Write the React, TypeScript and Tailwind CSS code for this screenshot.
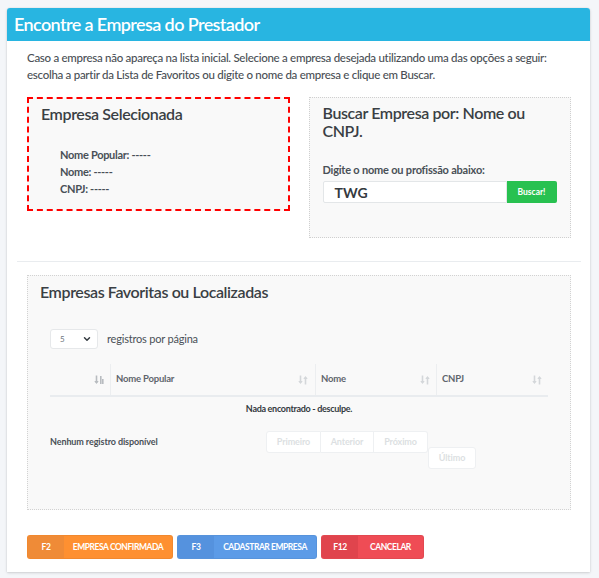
import { ChevronDown } from "lucide-react";

function SortIcon({ active }: { active?: boolean }) {
  const c = active ? "#b8bcc0" : "#d4d7da";
  return (
    <svg width="10" height="10" viewBox="0 0 10 10" className="shrink-0">
      {/* down arrow */}
      <path d="M2.5 0.5v7.5" stroke={c} strokeWidth="1.6" fill="none" />
      <path d="M0.3 6l2.2 3 2.2-3z" fill={c} />
      {active ? (
        <>
          <rect x="6" y="1" width="1.6" height="8" fill={c} />
          <rect x="8" y="4" width="1.6" height="5" fill={c} />
        </>
      ) : (
        <>
          <path d="M7.5 9.5v-7.5" stroke={c} strokeWidth="1.6" fill="none" />
          <path d="M5.3 4l2.2-3 2.2 3z" fill={c} />
        </>
      )}
    </svg>
  );
}

function ActionButton({ k, label, main, dark, w }: any) {
  return (
    <button
      className={`flex h-[24px] items-stretch overflow-hidden whitespace-nowrap rounded-[3px] border border-black/5 text-[8.5px] font-bold uppercase tracking-[-0.45px] text-white ${main} ${w}`}
    >
      <span className={`flex w-[36px] items-center justify-center ${dark}`}>{k}</span>
      <span className="flex flex-1 items-center justify-center">{label}</span>
    </button>
  );
}

export default function App() {
  return (
    <div className="min-h-[578px] bg-[#f4f6f9] pl-[7px] pr-[9px] pt-[8px] font-['Lato',sans-serif] text-[#495057]">
      <div className="rounded-t-[3px] bg-white pb-[13px] shadow-[0_0_1px_rgba(0,0,0,0.2),0_1px_3px_rgba(0,0,0,0.15)]">
        {/* HEADER */}
        <div className="flex h-[33px] items-center rounded-t-[3px] bg-[#28b5e1] px-[7px] text-[18px] font-semibold tracking-[-0.6px] text-white">
          Encontre a Empresa do Prestador
        </div>

        <div className="pl-[20px] pr-[19px]">
          <p className="pt-[8px] text-[11.5px] font-medium leading-[17px] tracking-[-0.28px] text-[#4a4f55]">
            Caso a empresa não apareça na lista inicial. Selecione a empresa desejada utilizando uma das opções a seguir:
            escolha a partir da Lista de Favoritos ou digite o nome da empresa e clique em Buscar.
          </p>

          {/* TOP BOXES */}
          <div className="mt-[14px] grid grid-cols-2 items-start gap-[19px]">
            <div className="border-2 border-dashed border-[#ff0000] bg-[#f9f9f9] pb-[11px] pl-[12px] pt-[4px]">
              <h3 className="text-[16px] font-semibold leading-[22px] tracking-[-0.4px] text-[#3a3f44]">
                Empresa Selecionada
              </h3>
              <div className="mt-[22px] space-y-[0.5px] pl-[19px] text-[11px] font-bold leading-[16.5px] tracking-[-0.3px] text-[#495057]">
                <div>Nome Popular: -----</div>
                <div>Nome: -----</div>
                <div>CNPJ: -----</div>
              </div>
            </div>

            <div className="border border-dotted border-[#cfcfcf] bg-[#f9f9f9] pb-[34px] pl-[13px] pr-[14px] pt-[6px]">
              <h3 className="text-[16px] font-semibold leading-[18px] tracking-[-0.4px] text-[#3a3f44]">
                Buscar Empresa por: Nome ou CNPJ.
              </h3>
              <label className="mt-[22px] block text-[11px] font-bold leading-[16px] tracking-[-0.2px] text-[#495057]">
                Digite o nome ou profissão abaixo:
              </label>
              <div className="mt-[3px] flex h-[22px] w-[234px]">
                <div className="flex flex-1 items-center rounded-l-[2px] border border-[#e3e6e8] bg-white pl-[11px] text-[14px] font-bold text-[#343a40]">
                  TWG
                </div>
                <button className="w-[50px] rounded-r-[2px] bg-[#28c150] text-[8.5px] font-bold text-white">
                  Buscar!
                </button>
              </div>
            </div>
          </div>

          <hr className="-mx-[10px] mt-[23px] border-t border-[#e9ecef]" />

          {/* FAVORITES */}
          <div className="mt-[13px] border border-dotted border-[#d2d2d2] bg-[#f9f9f9] pb-[40px] pl-[12px] pr-[22px] pt-[5px]">
            <h3 className="text-[16px] font-semibold leading-[22px] tracking-[-0.4px] text-[#3a3f44]">
              Empresas Favoritas ou Localizadas
            </h3>
            <div className="pl-[10px]">
              <div className="mt-[26px] flex items-center gap-[9px]">
                <div className="flex h-[20px] w-[48px] items-center justify-between rounded-[3px] border border-[#e6e8ea] bg-white pl-[9px] pr-[5px] text-[8px] text-[#6c757d]">
                  5
                  <ChevronDown size={10} strokeWidth={3.5} color="#343a40" />
                </div>
                <span className="text-[11px] tracking-[-0.2px] text-[#495057]">registros por página</span>
              </div>

              {/* TABLE */}
              <div className="mt-[15px] w-[498px]">
                <div className="flex h-[33px] border-b-2 border-[#e9ecef] text-[9.5px] font-bold tracking-[-0.2px] text-[#5f666d]">
                  <div className="flex w-[61px] items-center justify-end border-r border-[#eceef0] pr-[6px]">
                    <SortIcon active />
                  </div>
                  <div className="flex w-[205px] items-center justify-between border-r border-[#eceef0] pl-[5px] pr-[7px]">
                    Nome Popular <SortIcon />
                  </div>
                  <div className="flex w-[121px] items-center justify-between border-r border-[#eceef0] pl-[5px] pr-[6px]">
                    Nome <SortIcon />
                  </div>
                  <div className="flex w-[111px] items-center justify-between pl-[5px] pr-[6px]">
                    CNPJ <SortIcon />
                  </div>
                </div>
                <div className="pt-[5px] text-center text-[9px] font-bold leading-[14px] tracking-[-0.3px] text-[#343a40]">
                  Nada encontrado - desculpe.
                </div>
              </div>

              <div className="mt-[15px] flex items-start">
                <div className="w-[216px] pt-[4px] text-[9px] font-bold tracking-[-0.1px] text-[#495057]">
                  Nenhum registro disponível
                </div>
                <div className="flex items-start text-[9px] font-bold tracking-[-0.1px] text-[#dcdfe2]">
                  <span className="flex h-[22px] w-[55px] items-center justify-center rounded-l-[3px] border border-[#eef0f2] bg-white">
                    Primeiro
                  </span>
                  <span className="flex h-[22px] w-[53px] items-center justify-center border border-l-0 border-[#eef0f2] bg-white">
                    Anterior
                  </span>
                  <span className="flex h-[22px] w-[54px] items-center justify-center rounded-r-[3px] border border-l-0 border-[#eef0f2] bg-white">
                    Próximo
                  </span>
                  <span className="mt-[16px] flex h-[22px] w-[48px] items-center justify-center rounded-[3px] border border-[#eef0f2] bg-white">
                    Último
                  </span>
                </div>
              </div>
            </div>
          </div>

          {/* ACTIONS */}
          <div className="mt-[25px] flex gap-[4px]">
            <ActionButton k="F2" label="Empresa Confirmada" main="bg-[#fe9031]" dark="bg-[#ef8b37]" w="w-[146px]" />
            <ActionButton k="F3" label="Cadastrar Empresa" main="bg-[#5c9be7]" dark="bg-[#5592de]" w="w-[140px]" />
            <ActionButton k="F12" label="Cancelar" main="bg-[#ef4c55]" dark="bg-[#e0444d]" w="w-[103px]" />
          </div>
        </div>
      </div>
    </div>
  );
}
